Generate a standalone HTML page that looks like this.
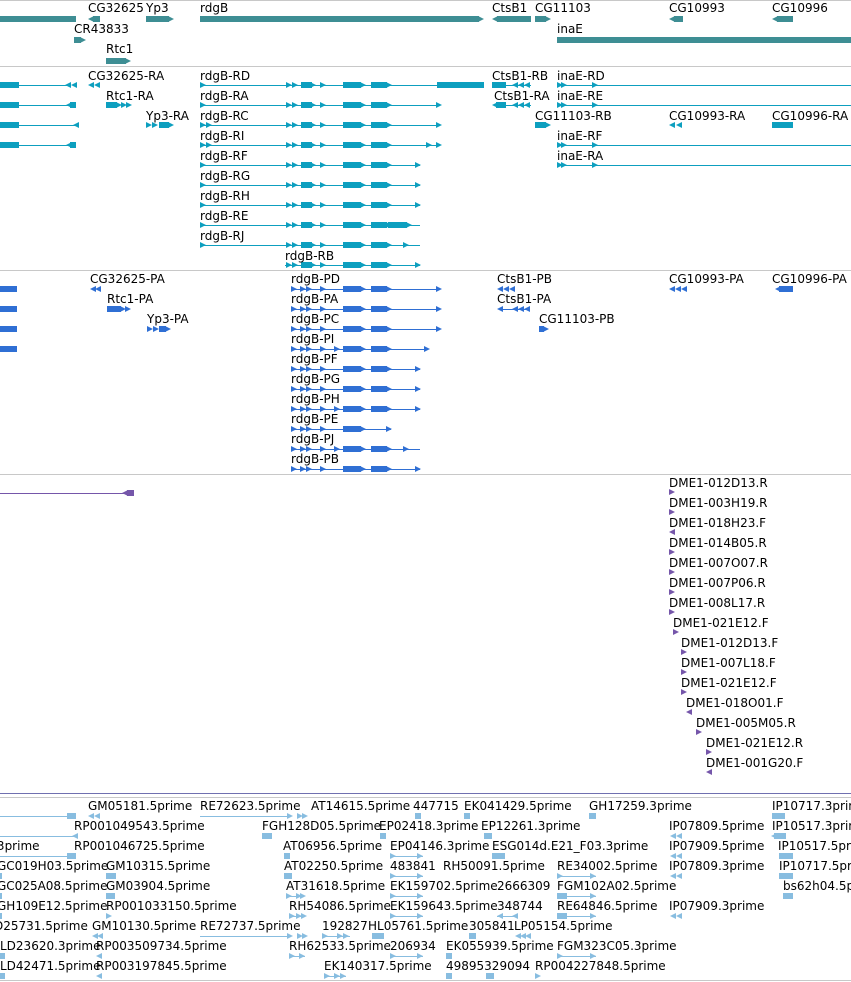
<!DOCTYPE html>
<html><head><meta charset="utf-8"><style>
html,body{margin:0;padding:0;background:#fff;width:851px;height:982px;overflow:hidden}
svg{display:block}
text{font-family:"DejaVu Sans","Liberation Sans",sans-serif;font-size:12px;fill:#000}
</style></head><body>
<svg width="851" height="982" viewBox="0 0 851 982" xmlns="http://www.w3.org/2000/svg" shape-rendering="crispEdges">
<defs>
<polygon id="r" points="0,-3 6,0 0,3"/>
<polygon id="l" points="6,-3 0,0 6,3"/>
<g id="ex">
<use href="#r" x="286"/><use href="#r" x="292"/>
<rect x="301" y="-3" width="11" height="6"/><use href="#r" x="310"/>
<use href="#r" x="320"/>
<rect x="343" y="-3" width="18" height="6"/><use href="#r" x="360"/>
<rect x="371" y="-3" width="16" height="6"/><use href="#r" x="386"/>
</g>
<g id="tx">
<rect x="200" y="0" width="220" height="1"/>
<use href="#r" x="200"/>
<use href="#ex"/>
</g>
<g id="px">
<rect x="291" y="0" width="129" height="1"/>
<use href="#r" x="291"/><use href="#r" x="300"/><use href="#r" x="306"/>
<use href="#r" x="320"/>
<rect x="343" y="-3" width="18" height="6"/><use href="#r" x="360"/>
<rect x="371" y="-3" width="16" height="6"/><use href="#r" x="386"/>
</g>
</defs>

<rect x="0" y="0" width="851" height="1" fill="#c8c8c8"/>
<rect x="0" y="66" width="851" height="1" fill="#c8c8c8"/>
<rect x="0" y="270" width="851" height="1" fill="#c8c8c8"/>
<rect x="0" y="474" width="851" height="1" fill="#c8c8c8"/>
<rect x="0" y="793" width="851" height="1" fill="#7070b0"/>
<rect x="0" y="797" width="851" height="1" fill="#c8c8c8"/>
<rect x="0" y="980" width="851" height="1" fill="#c8c8c8"/>

<g fill="#3e8e94">
<rect x="0" y="16" width="76" height="6"/>
<rect x="93" y="16" width="7" height="6"/><use href="#l" x="88" y="19"/>
<rect x="146" y="16" width="23" height="6"/><use href="#r" x="168" y="19"/>
<rect x="200" y="16" width="279" height="6"/><use href="#r" x="478" y="19"/>
<rect x="497" y="16" width="34" height="6"/><use href="#l" x="492" y="19"/>
<rect x="535" y="16" width="11" height="6"/><use href="#r" x="545" y="19"/>
<rect x="674" y="16" width="9" height="6"/><use href="#l" x="669" y="19"/>
<rect x="777" y="16" width="16" height="6"/><use href="#l" x="772" y="19"/>
<rect x="74" y="37" width="7" height="6"/><use href="#r" x="80" y="40"/>
<rect x="106" y="58" width="20" height="6"/><use href="#r" x="125" y="61"/>
<rect x="557" y="37" width="294" height="6"/>
</g>
<text x="88" y="12">CG32625</text><text x="146" y="12">Yp3</text><text x="200" y="12">rdgB</text>
<text x="492" y="12">CtsB1</text><text x="535" y="12">CG11103</text><text x="669" y="12">CG10993</text><text x="772" y="12">CG10996</text>
<text x="74" y="33">CR43833</text><text x="557" y="33">inaE</text><text x="106" y="53">Rtc1</text>

<g fill="#0d9fbf">
<rect x="0" y="82" width="19" height="6"/><rect x="19" y="85" width="48" height="1"/><use href="#l" x="65" y="85"/><use href="#l" x="71" y="85"/>
<use href="#l" x="88" y="85"/><use href="#l" x="94" y="85"/>
<rect x="0" y="102" width="19" height="6"/><rect x="19" y="105" width="50" height="1"/><rect x="70" y="102" width="6" height="6"/><use href="#l" x="66" y="105"/>
<rect x="106" y="102" width="11" height="6"/><use href="#r" x="116" y="105"/><use href="#r" x="121" y="105"/><use href="#r" x="126" y="105"/>
<rect x="0" y="122" width="19" height="6"/><rect x="19" y="125" width="56" height="1"/><use href="#l" x="73" y="125"/>
<use href="#r" x="146" y="125"/><use href="#r" x="152" y="125"/><rect x="159" y="122" width="10" height="6"/><use href="#r" x="168" y="125"/>
<rect x="0" y="142" width="19" height="6"/><rect x="19" y="145" width="50" height="1"/><rect x="70" y="142" width="6" height="6"/><use href="#l" x="66" y="145"/>

<use href="#tx" y="85"/><rect x="420" y="85" width="20" height="1"/><rect x="437" y="82" width="47" height="6"/>
<use href="#tx" y="105"/><rect x="420" y="105" width="20" height="1"/><use href="#r" x="436" y="105"/>
<use href="#tx" y="125"/><use href="#r" x="206" y="125"/><rect x="420" y="125" width="20" height="1"/><use href="#r" x="436" y="125"/>
<use href="#tx" y="145"/><use href="#r" x="206" y="145"/><rect x="420" y="145" width="20" height="1"/><use href="#r" x="426" y="145"/><use href="#r" x="436" y="145"/>
<use href="#tx" y="165"/><use href="#r" x="415" y="165"/>
<use href="#tx" y="185"/><use href="#r" x="415" y="185"/>
<use href="#tx" y="205"/><use href="#r" x="415" y="205"/>
<use href="#tx" y="225"/><rect x="388" y="222" width="19" height="6"/><use href="#r" x="406" y="225"/>
<use href="#tx" y="245"/><use href="#r" x="403" y="245"/>
<rect x="285" y="265" width="135" height="1"/><use href="#ex" y="265"/><use href="#r" x="415" y="265"/>

<rect x="492" y="82" width="14" height="6"/><rect x="506" y="85" width="25" height="1"/><use href="#l" x="512" y="85"/><use href="#l" x="518" y="85"/><use href="#l" x="524" y="85"/>
<rect x="496" y="102" width="10" height="6"/><use href="#l" x="492" y="105"/><rect x="506" y="105" width="25" height="1"/><use href="#l" x="512" y="105"/><use href="#l" x="518" y="105"/><use href="#l" x="524" y="105"/>
<rect x="535" y="122" width="11" height="6"/><use href="#r" x="545" y="125"/>
<use href="#l" x="669" y="125"/><use href="#l" x="676" y="125"/>
<rect x="772" y="122" width="21" height="6"/>
<rect x="557" y="85" width="294" height="1"/><use href="#r" x="557" y="85"/><use href="#r" x="561" y="85"/><use href="#r" x="592" y="85"/>
<rect x="557" y="105" width="294" height="1"/><use href="#r" x="557" y="105"/><use href="#r" x="561" y="105"/><use href="#r" x="592" y="105"/>
<rect x="557" y="145" width="294" height="1"/><use href="#r" x="557" y="145"/><use href="#r" x="561" y="145"/><use href="#r" x="592" y="145"/>
<rect x="557" y="165" width="294" height="1"/><use href="#r" x="557" y="165"/><use href="#r" x="561" y="165"/><use href="#r" x="592" y="165"/>
</g>
<text x="88" y="80">CG32625-RA</text><text x="200" y="80">rdgB-RD</text><text x="492" y="80">CtsB1-RB</text><text x="557" y="80">inaE-RD</text>
<text x="106" y="100">Rtc1-RA</text><text x="200" y="100">rdgB-RA</text><text x="494" y="100">CtsB1-RA</text><text x="557" y="100">inaE-RE</text>
<text x="146" y="120">Yp3-RA</text><text x="200" y="120">rdgB-RC</text><text x="535" y="120">CG11103-RB</text><text x="669" y="120">CG10993-RA</text><text x="772" y="120">CG10996-RA</text>
<text x="200" y="140">rdgB-RI</text><text x="557" y="140">inaE-RF</text>
<text x="200" y="160">rdgB-RF</text><text x="557" y="160">inaE-RA</text>
<text x="200" y="180">rdgB-RG</text><text x="200" y="200">rdgB-RH</text><text x="200" y="220">rdgB-RE</text><text x="200" y="240">rdgB-RJ</text><text x="285" y="260">rdgB-RB</text>

<g fill="#2f6fd4">
<rect x="0" y="286" width="17" height="6"/><rect x="0" y="306" width="17" height="6"/><rect x="0" y="326" width="17" height="6"/><rect x="0" y="346" width="17" height="6"/>
<use href="#l" x="90" y="289"/><use href="#l" x="95" y="289"/>
<rect x="107" y="306" width="14" height="6"/><use href="#r" x="120" y="309"/><use href="#r" x="125" y="309"/>
<use href="#r" x="147" y="329"/><use href="#r" x="153" y="329"/><rect x="159" y="326" width="7" height="6"/><use href="#r" x="165" y="329"/>
<use href="#px" y="289"/><rect x="420" y="289" width="20" height="1"/><use href="#r" x="436" y="289"/>
<use href="#px" y="309"/><rect x="420" y="309" width="20" height="1"/><use href="#r" x="436" y="309"/>
<use href="#px" y="329"/><rect x="420" y="329" width="20" height="1"/><use href="#r" x="436" y="329"/>
<use href="#px" y="349"/><rect x="420" y="349" width="8" height="1"/><use href="#r" x="424" y="349"/><use href="#r" x="334" y="349"/>
<use href="#px" y="369"/><use href="#r" x="415" y="369"/>
<use href="#px" y="389"/><use href="#r" x="415" y="389"/>
<use href="#px" y="409"/><use href="#r" x="415" y="409"/><use href="#r" x="334" y="409"/>
<g><rect x="291" y="429" width="100" height="1"/><use href="#r" x="291" y="429"/><use href="#r" x="300" y="429"/><use href="#r" x="306" y="429"/><use href="#r" x="320" y="429"/><rect x="343" y="426" width="18" height="6"/><use href="#r" x="360" y="429"/><use href="#r" x="386" y="429"/></g>
<use href="#px" y="449"/><use href="#r" x="334" y="449"/><rect x="391" y="449" width="14" height="1"/><use href="#r" x="403" y="449"/>
<use href="#px" y="469"/><use href="#r" x="415" y="469"/>
<use href="#l" x="497" y="289"/><use href="#l" x="503" y="289"/><use href="#l" x="509" y="289"/>
<use href="#l" x="497" y="309"/><rect x="500" y="309" width="30" height="1"/><use href="#l" x="512" y="309"/><use href="#l" x="518" y="309"/><use href="#l" x="524" y="309"/>
<rect x="539" y="326" width="5" height="6"/><use href="#r" x="543" y="329"/>
<use href="#l" x="669" y="289"/><use href="#l" x="675" y="289"/><use href="#l" x="681" y="289"/>
<rect x="779" y="286" width="14" height="6"/><use href="#l" x="775" y="289"/>
</g>
<text x="90" y="283">CG32625-PA</text><text x="291" y="283">rdgB-PD</text><text x="497" y="283">CtsB1-PB</text><text x="669" y="283">CG10993-PA</text><text x="772" y="283">CG10996-PA</text>
<text x="107" y="303">Rtc1-PA</text><text x="291" y="303">rdgB-PA</text><text x="497" y="303">CtsB1-PA</text>
<text x="147" y="323">Yp3-PA</text><text x="291" y="323">rdgB-PC</text><text x="539" y="323">CG11103-PB</text>
<text x="291" y="343">rdgB-PI</text><text x="291" y="363">rdgB-PF</text><text x="291" y="383">rdgB-PG</text><text x="291" y="403">rdgB-PH</text>
<text x="291" y="423">rdgB-PE</text><text x="291" y="443">rdgB-PJ</text><text x="291" y="463">rdgB-PB</text>

<g fill="#7556aa">
<rect x="0" y="493" width="125" height="1"/><rect x="127" y="490" width="7" height="6"/><use href="#l" x="122" y="493"/>
<polygon points="669,489 675,492 669,495"/>
<polygon points="669,509 675,512 669,515"/>
<polygon points="675,529 669,532 675,535"/>
<polygon points="669,549 675,552 669,555"/>
<polygon points="669,569 675,572 669,575"/>
<polygon points="669,589 675,592 669,595"/>
<polygon points="669,609 675,612 669,615"/>
<polygon points="673,629 679,632 673,635"/>
<polygon points="681,649 687,652 681,655"/>
<polygon points="681,669 687,672 681,675"/>
<polygon points="681,689 687,692 681,695"/>
<polygon points="692,709 686,712 692,715"/>
<polygon points="696,729 702,732 696,735"/>
<polygon points="706,749 712,752 706,755"/>
<polygon points="712,769 706,772 712,775"/>
</g>
<text x="669" y="487">DME1-012D13.R</text><text x="669" y="507">DME1-003H19.R</text><text x="669" y="527">DME1-018H23.F</text>
<text x="669" y="547">DME1-014B05.R</text><text x="669" y="567">DME1-007O07.R</text><text x="669" y="587">DME1-007P06.R</text>
<text x="669" y="607">DME1-008L17.R</text><text x="673" y="627">DME1-021E12.F</text><text x="681" y="647">DME1-012D13.F</text>
<text x="681" y="667">DME1-007L18.F</text><text x="681" y="687">DME1-021E12.F</text><text x="686" y="707">DME1-018O01.F</text>
<text x="696" y="727">DME1-005M05.R</text><text x="706" y="747">DME1-021E12.R</text><text x="706" y="767">DME1-001G20.F</text>

<g fill="#88bde0">
<rect x="0" y="816" width="68" height="1"/><rect x="67" y="813" width="9" height="6"/>
<use href="#l" x="88" y="816"/><use href="#l" x="94" y="816"/>
<rect x="200" y="816" width="90" height="1"/><use href="#r" x="287" y="816"/><use href="#r" x="297" y="816"/><use href="#r" x="302" y="816"/>
<rect x="415" y="813" width="6" height="6"/><rect x="464" y="813" width="6" height="6"/><rect x="589" y="813" width="7" height="6"/><rect x="772" y="813" width="13" height="6"/>
<rect x="0" y="836" width="74" height="1"/><use href="#l" x="72" y="836"/>
<rect x="262" y="833" width="10" height="6"/><rect x="380" y="833" width="6" height="6"/><rect x="484" y="833" width="8" height="6"/>
<use href="#l" x="670" y="836"/><use href="#l" x="676" y="836"/><rect x="774" y="833" width="12" height="6"/><use href="#l" x="771" y="836"/>
<rect x="0" y="856" width="68" height="1"/><rect x="67" y="853" width="9" height="6"/>
<rect x="284" y="853" width="6" height="6"/><rect x="390" y="856" width="33" height="1"/><use href="#r" x="390" y="856"/><use href="#r" x="417" y="856"/>
<rect x="492" y="853" width="13" height="6"/><use href="#l" x="670" y="856"/><use href="#l" x="676" y="856"/><rect x="779" y="853" width="14" height="6"/>
<rect x="0" y="873" width="2" height="6"/><rect x="106" y="873" width="10" height="6"/><rect x="284" y="873" width="8" height="6"/>
<rect x="390" y="876" width="33" height="1"/><use href="#r" x="390" y="876"/><use href="#r" x="417" y="876"/>
<rect x="557" y="876" width="39" height="1"/><use href="#r" x="557" y="876"/><use href="#r" x="590" y="876"/>
<use href="#l" x="670" y="876"/><use href="#l" x="676" y="876"/><rect x="779" y="873" width="14" height="6"/>
<rect x="0" y="893" width="2" height="6"/><rect x="106" y="893" width="9" height="6"/>
<rect x="286" y="896" width="16" height="1"/><use href="#r" x="286" y="896"/><use href="#r" x="296" y="896"/><use href="#r" x="300" y="896"/>
<rect x="390" y="896" width="33" height="1"/><use href="#r" x="390" y="896"/><use href="#r" x="417" y="896"/>
<rect x="557" y="893" width="10" height="6"/><rect x="557" y="896" width="39" height="1"/><use href="#r" x="590" y="896"/>
<rect x="783" y="893" width="10" height="6"/>
<rect x="0" y="913" width="2" height="6"/><use href="#r" x="106" y="916"/>
<rect x="289" y="916" width="14" height="1"/><use href="#r" x="289" y="916"/><use href="#r" x="296" y="916"/><use href="#r" x="301" y="916"/>
<rect x="390" y="916" width="33" height="1"/><use href="#r" x="390" y="916"/><use href="#r" x="417" y="916"/>
<rect x="497" y="916" width="20" height="1"/><use href="#l" x="497" y="916"/><use href="#l" x="512" y="916"/>
<rect x="557" y="913" width="10" height="6"/><rect x="557" y="916" width="39" height="1"/><use href="#r" x="590" y="916"/>
<use href="#l" x="670" y="916"/><use href="#l" x="676" y="916"/>
<use href="#l" x="92" y="936"/><use href="#l" x="97" y="936"/>
<rect x="200" y="936" width="90" height="1"/><use href="#r" x="287" y="936"/><use href="#r" x="297" y="936"/><use href="#r" x="302" y="936"/>
<rect x="322" y="936" width="28" height="1"/><use href="#r" x="322" y="936"/><use href="#r" x="337" y="936"/><use href="#r" x="343" y="936"/>
<rect x="372" y="933" width="12" height="6"/><rect x="469" y="933" width="7" height="6"/>
<use href="#l" x="515" y="936"/><use href="#l" x="520" y="936"/><use href="#l" x="525" y="936"/>
<rect x="0" y="953" width="5" height="6"/><use href="#l" x="96" y="956"/>
<rect x="289" y="956" width="16" height="1"/><use href="#r" x="289" y="956"/><use href="#r" x="299" y="956"/>
<rect x="390" y="956" width="33" height="1"/><use href="#r" x="390" y="956"/><use href="#r" x="417" y="956"/>
<rect x="446" y="953" width="6" height="6"/>
<rect x="557" y="956" width="39" height="1"/><use href="#r" x="557" y="956"/><use href="#r" x="590" y="956"/>
<rect x="0" y="973" width="5" height="6"/><use href="#l" x="96" y="976"/>
<rect x="324" y="976" width="22" height="1"/><use href="#r" x="324" y="976"/><use href="#r" x="334" y="976"/><use href="#r" x="340" y="976"/>
<rect x="446" y="973" width="6" height="6"/><rect x="486" y="973" width="8" height="6"/><use href="#r" x="535" y="976"/>
</g>
<text x="88" y="810">GM05181.5prime</text><text x="200" y="810">RE72623.5prime</text><text x="311" y="810">AT14615.5prime</text><text x="413" y="810">447715</text><text x="464" y="810">EK041429.5prime</text><text x="589" y="810">GH17259.3prime</text><text x="772" y="810">IP10717.3prime</text>
<text x="74" y="830">RP001049543.5prime</text><text x="262" y="830">FGH128D05.5prime</text><text x="379" y="830">EP02418.3prime</text><text x="481" y="830">EP12261.3prime</text><text x="669" y="830">IP07809.5prime</text><text x="772" y="830">IP10517.3prime</text>
<text x="-38" y="850">0A35.3prime</text><text x="74" y="850">RP001046725.5prime</text><text x="283" y="850">AT06956.5prime</text><text x="390" y="850">EP04146.3prime</text><text x="492" y="850">ESG014d.E21_F03.3prime</text><text x="669" y="850">IP07909.5prime</text><text x="778" y="850">IP10517.5prime</text>
<text x="-3" y="870">GC019H03.5prime</text><text x="106" y="870">GM10315.5prime</text><text x="284" y="870">AT02250.5prime</text><text x="390" y="870">483841</text><text x="443" y="870">RH50091.5prime</text><text x="557" y="870">RE34002.5prime</text><text x="669" y="870">IP07809.3prime</text><text x="779" y="870">IP10717.5prime</text>
<text x="-3" y="890">GC025A08.5prime</text><text x="106" y="890">GM03904.5prime</text><text x="286" y="890">AT31618.5prime</text><text x="390" y="890">EK159702.5prime</text><text x="497" y="890">2666309</text><text x="557" y="890">FGM102A02.5prime</text><text x="783" y="890">bs62h04.5prime</text>
<text x="-3" y="910">GH109E12.5prime</text><text x="106" y="910">RP001033150.5prime</text><text x="289" y="910">RH54086.5prime</text><text x="390" y="910">EK159643.5prime</text><text x="497" y="910">348744</text><text x="557" y="910">RE64846.5prime</text><text x="669" y="910">IP07909.3prime</text>
<text x="-6" y="930">D25731.5prime</text><text x="92" y="930">GM10130.5prime</text><text x="200" y="930">RE72737.5prime</text><text x="322" y="930">192827</text><text x="368" y="930">HL05761.5prime</text><text x="469" y="930">305841</text><text x="514" y="930">LP05154.5prime</text>
<text x="0" y="950">LD23620.3prime</text><text x="96" y="950">RP003509734.5prime</text><text x="289" y="950">RH62533.5prime</text><text x="390" y="950">206934</text><text x="446" y="950">EK055939.5prime</text><text x="557" y="950">FGM323C05.3prime</text>
<text x="0" y="970">LD42471.5prime</text><text x="96" y="970">RP003197845.5prime</text><text x="324" y="970">EK140317.5prime</text><text x="446" y="970">49895329094</text><text x="535" y="970">RP004227848.5prime</text>
</svg>
</body></html>
